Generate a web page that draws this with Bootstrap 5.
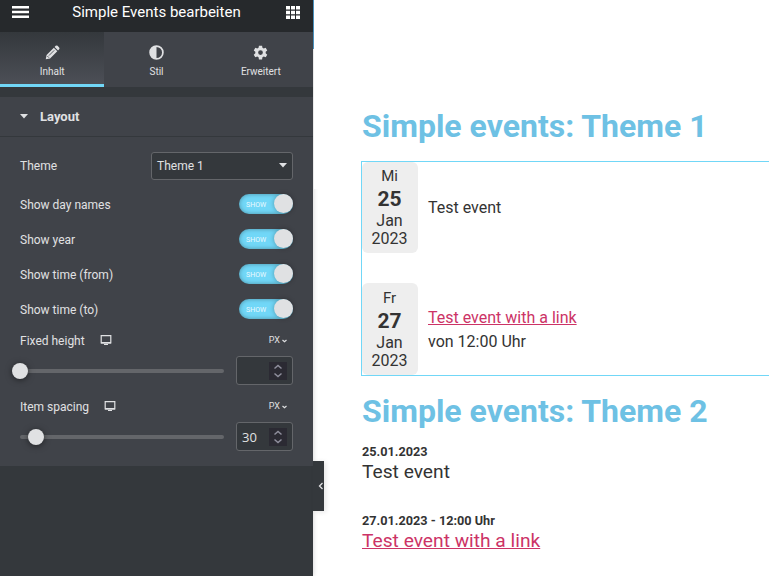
<!DOCTYPE html>
<html lang="de">
<head>
<meta charset="utf-8">
<meta name="viewport" content="width=device-width, initial-scale=1">
<title>Simple Events bearbeiten</title>
<link href="https://cdn.jsdelivr.net/npm/bootstrap@5.3.0/dist/css/bootstrap.min.css" rel="stylesheet">
<script src="https://cdn.jsdelivr.net/npm/bootstrap@5.3.0/dist/js/bootstrap.bundle.min.js" defer></script>
<style>
body{font-family:Roboto,"Liberation Sans",sans-serif;color:#333;background:#fff;height:576px}
svg{display:block;flex:none}
.panel{width:313px;background:#34383c;color:#e0e1e3;font-size:12px;line-height:1;z-index:2;box-shadow:0 0 5px rgba(0,0,0,.2)}
.panel-top{height:32px;background:#26292c;color:#fff;padding:0 13px 8px 12px}
.panel-title{font-size:15px;line-height:24px;margin-right:2px}
.panel-tabs{height:55px;margin-bottom:10px}
.panel-tab{background:#404349;font-size:10px;padding-top:13px;gap:7px;border-bottom:3px solid #404349;color:#e0e1e3}
.panel-tab.active{background:linear-gradient(#34383c,#4c4f56);border-color:#71d7f7}
.section-head{height:40px;background:#404349;border-bottom:1px solid #34383c;padding:0 20px;font-size:13px;font-weight:700}
.controls{height:329px;background:#404349;padding:15px 20px 0}
.theme-row{height:27px;margin-bottom:8px}
.theme-select{width:142px;height:28px;background:#34383c;border:1px solid #64666a;border-radius:3px;padding:0 5px}
.toggle-row{height:35px}
.switch{width:54px;height:20px;margin-bottom:2px;border-radius:10px;background:#71d7f7;box-shadow:inset 0 0 4px rgba(0,0,0,.35);padding-left:7px;font-size:7px;color:#eaf9ff}
.switch-text{padding-top:3px}
.knob{width:19px;height:19px;border-radius:50%;background:#e0e1e3;box-shadow:0 0 5px rgba(0,0,0,.3)}
.slider-block{height:66px}
.slider-label{height:17px;margin-top:1px}
.device{margin-left:15px}
.unit{font-size:9px;margin-right:6px;gap:2px}
.slider-row{height:29px;margin-top:7px}
.track{width:204px;height:4px;border-radius:3px;background:#64666a}
.thumb{width:16px;height:16px;border-radius:50%;top:-6px;margin-left:-8px;background:#e0e1e3;box-shadow:0 1px 6px rgba(0,0,0,.5)}
.num{width:57px;height:29px;background:#34383c;border:1px solid #64666a;border-radius:3px;padding:0 5px;font:13px "Open Sans","Noto Sans",sans-serif}
.spin{width:18px;height:18px;background:#2b2a33}
.collapse-tab{left:313px;top:461px;width:11px;height:50px;background:#34383c;box-shadow:2px 1px 5px rgba(0,0,0,.1);z-index:3;overflow:hidden;padding-left:5px}
.edge-line{left:313px;top:0;width:1px;height:49px;background:#4a91bd;z-index:3}
.edge-cover{left:314px;top:0;width:8px;height:189px;background:#fff;z-index:3}
.preview{padding:106px 0 0 48px;overflow:hidden}
.heading{font-size:32px;font-weight:700;line-height:40px;color:#6ec1e4;margin:0 0 0 1px}
.widget{height:215px;border:1px solid #71d7f7;border-right:0;margin:15px 0}
.date-box{width:56px;height:91px;background:#eee;border-radius:6px;font-size:16px;line-height:18px;padding:5px 1px 0 0}
.date-box.tall{height:92px;padding-top:6px}
.date-box .dow{font-size:15px}
.date-box .day{font-size:21px;font-weight:700;line-height:28px;height:27px}
.event-copy{font-size:16px;line-height:24px;margin-left:10px}
.linked-copy{padding-top:23px}
.event-link{color:#cc3366;text-decoration:underline}
.simple-list{padding:12px 0 0 1px}
.stamp{font-size:12.7px;font-weight:700;line-height:18px}
.event-name{font-size:19.2px;line-height:22px;margin-bottom:29px}
</style>
</head>
<body class="d-flex overflow-hidden position-relative">
<aside class="panel flex-shrink-0 h-100 position-relative">
  <header class="panel-top d-flex align-items-center justify-content-between">
    <svg width="17" height="12" viewBox="0 0 17 12" fill="#fff"><path d="M0 0h17v2.400H0zM0 4.800h17v2.400H0zM0 9.600h17V12H0z"/></svg>
    <div class="panel-title">Simple Events bearbeiten</div>
    <svg width="14" height="13" viewBox="0 0 14 13" fill="#fff"><path d="M0 0h4v3.500H0zM5 0h4v3.500H5zM10 0h4v3.500h-4zM0 4.800h4v3.500H0zM5 4.800h4v3.500H5zM10 4.800h4v3.500h-4zM0 9.500h4V13H0zM5 9.500h4V13H5zM10 9.500h4V13h-4z"/></svg>
  </header>
  <nav class="panel-tabs row g-0">
    <div class="panel-tab active col d-flex flex-column align-items-center">
      <svg width="15" height="15" viewBox="0 0 16 16" fill="#e0e1e3"><path d="M.8 15.200l.9-4.600 7.700-7.700 3.700 3.700-7.700 7.700zM10.200 2.100l1.200-1.200q1-.8 2 0l1.700 1.700q.8 1 0 2l-1.200 1.200z"/><path d="M4.200 11.300l5.600-5.600M2.500 11.800l1.700 1.700" stroke="#404349" stroke-width=".9"/></svg>
      <span>Inhalt</span>
    </div>
    <div class="panel-tab col d-flex flex-column align-items-center">
      <svg width="15" height="15" viewBox="0 0 15 15"><circle cx="7.500" cy="7.500" r="6.400" fill="none" stroke="#e0e1e3" stroke-width="1.700"/><path d="M7.500 1a6.500 6.500 0 0 0 0 13z" fill="#e0e1e3"/></svg>
      <span>Stil</span>
    </div>
    <div class="panel-tab col d-flex flex-column align-items-center">
      <svg width="15" height="15" viewBox="0 0 24 24" fill="#e0e1e3"><path fill-rule="evenodd" d="M9.500 1h5l.6 3.300 2.100 1.200 3.100-1.200 2.500 4.300-2.500 2.200v2.400l2.500 2.200-2.500 4.300-3.100-1.200-2.100 1.200-.6 3.300h-5l-.6-3.300-2.100-1.200-3.100 1.200-2.500-4.300 2.500-2.200v-2.400L1.200 8.600l2.500-4.300 3.100 1.200 2.100-1.200zM12 8.200a3.800 3.800 0 1 0 0 7.600 3.800 3.800 0 0 0 0-7.600z"/></svg>
      <span>Erweitert</span>
    </div>
  </nav>
  <div class="section-head d-flex align-items-center">
    <svg width="8" height="5" viewBox="0 0 8 5" fill="#e0e1e3"><path d="M0 0h8L4 4.500z"/></svg>
    <span class="ms-auto flex-grow-1 ps-2"><span class="ps-1">Layout</span></span>
  </div>
  <div class="controls">
    <div class="theme-row d-flex align-items-center justify-content-between">
      <span>Theme</span>
      <div class="theme-select d-flex align-items-center justify-content-between"><span>Theme 1</span>
        <svg width="8" height="5" viewBox="0 0 8 5" fill="#e0e1e3"><path d="M0 0h8L4 4.500z"/></svg></div>
    </div>
    <div class="toggle-row d-flex align-items-center justify-content-between"><span>Show day names</span><div class="switch d-flex align-items-center justify-content-between"><span class="switch-text">SHOW</span><span class="knob"></span></div></div>
    <div class="toggle-row d-flex align-items-center justify-content-between"><span>Show year</span><div class="switch d-flex align-items-center justify-content-between"><span class="switch-text">SHOW</span><span class="knob"></span></div></div>
    <div class="toggle-row d-flex align-items-center justify-content-between"><span>Show time (from)</span><div class="switch d-flex align-items-center justify-content-between"><span class="switch-text">SHOW</span><span class="knob"></span></div></div>
    <div class="toggle-row d-flex align-items-center justify-content-between"><span>Show time (to)</span><div class="switch d-flex align-items-center justify-content-between"><span class="switch-text">SHOW</span><span class="knob"></span></div></div>
    <div class="slider-block pt-1">
      <div class="slider-label d-flex align-items-center">
        <span>Fixed height</span>
        <svg class="device" width="12" height="11" viewBox="0 0 12 11"><path d="M1.200.7h9.600v7.100H1.200z" fill="none" stroke="#e0e1e3" stroke-width="1.200"/><path d="M1 7h10v1.500H1zM4 9h4v1H4z" fill="#e0e1e3"/></svg>
        <span class="unit ms-auto d-flex align-items-center">PX<svg width="5" height="4" viewBox="0 0 5 4"><path d="M.5 1l2 1.700L4.500 1" fill="none" stroke="#e0e1e3" stroke-width="1.200"/></svg></span>
      </div>
      <div class="slider-row d-flex align-items-center justify-content-between">
        <div class="track position-relative"><span class="thumb position-absolute" style="left:0"></span></div>
        <div class="num d-flex align-items-center justify-content-between"><span></span><span class="spin"><svg width="18" height="18" viewBox="0 0 18 18" fill="none" stroke="#8f8f9d" stroke-width="1.500"><path d="M5.500 6.500L9 3.500l3.500 3M5.500 11.500l3.500 3 3.500-3"/></svg></span></div>
      </div>
    </div>
    <div class="slider-block pt-1">
      <div class="slider-label d-flex align-items-center">
        <span>Item spacing</span>
        <svg class="device" width="12" height="11" viewBox="0 0 12 11"><path d="M1.200.7h9.600v7.100H1.200z" fill="none" stroke="#e0e1e3" stroke-width="1.200"/><path d="M1 7h10v1.500H1zM4 9h4v1H4z" fill="#e0e1e3"/></svg>
        <span class="unit ms-auto d-flex align-items-center">PX<svg width="5" height="4" viewBox="0 0 5 4"><path d="M.5 1l2 1.700L4.500 1" fill="none" stroke="#e0e1e3" stroke-width="1.200"/></svg></span>
      </div>
      <div class="slider-row d-flex align-items-center justify-content-between">
        <div class="track position-relative"><span class="thumb position-absolute" style="left:16px"></span></div>
        <div class="num d-flex align-items-center justify-content-between"><span>30</span><span class="spin"><svg width="18" height="18" viewBox="0 0 18 18" fill="none" stroke="#8f8f9d" stroke-width="1.500"><path d="M5.500 6.500L9 3.500l3.500 3M5.500 11.500l3.500 3 3.500-3"/></svg></span></div>
      </div>
    </div>
  </div>
</aside>
<div class="edge-line position-absolute"></div>
<div class="edge-cover position-absolute"></div>
<div class="collapse-tab position-absolute d-flex align-items-center"><svg width="6" height="8" viewBox="0 0 6 8"><path d="M4.500 1L1.500 4l3 3" fill="none" stroke="#e0e1e3" stroke-width="1.300"/></svg></div>
<main class="preview flex-grow-1">
  <h2 class="heading">Simple events: Theme 1</h2>
  <div class="widget d-flex flex-column justify-content-between">
    <div class="d-flex align-items-center">
      <div class="date-box text-center"><div class="dow">Mi</div><div class="day">25</div><div>Jan</div><div>2023</div></div>
      <div class="event-copy">Test event</div>
    </div>
    <div class="d-flex">
      <div class="date-box tall text-center"><div class="dow">Fr</div><div class="day">27</div><div>Jan</div><div>2023</div></div>
      <div class="event-copy linked-copy"><a class="event-link" href="#">Test event with a link</a><br>von 12:00 Uhr</div>
    </div>
  </div>
  <h2 class="heading">Simple events: Theme 2</h2>
  <div class="simple-list">
    <div class="stamp">25.01.2023</div>
    <div class="event-name">Test event</div>
    <div class="stamp">27.01.2023 - 12:00 Uhr</div>
    <div class="event-name"><a class="event-link" href="#">Test event with a link</a></div>
  </div>
</main>
</body>
</html>
